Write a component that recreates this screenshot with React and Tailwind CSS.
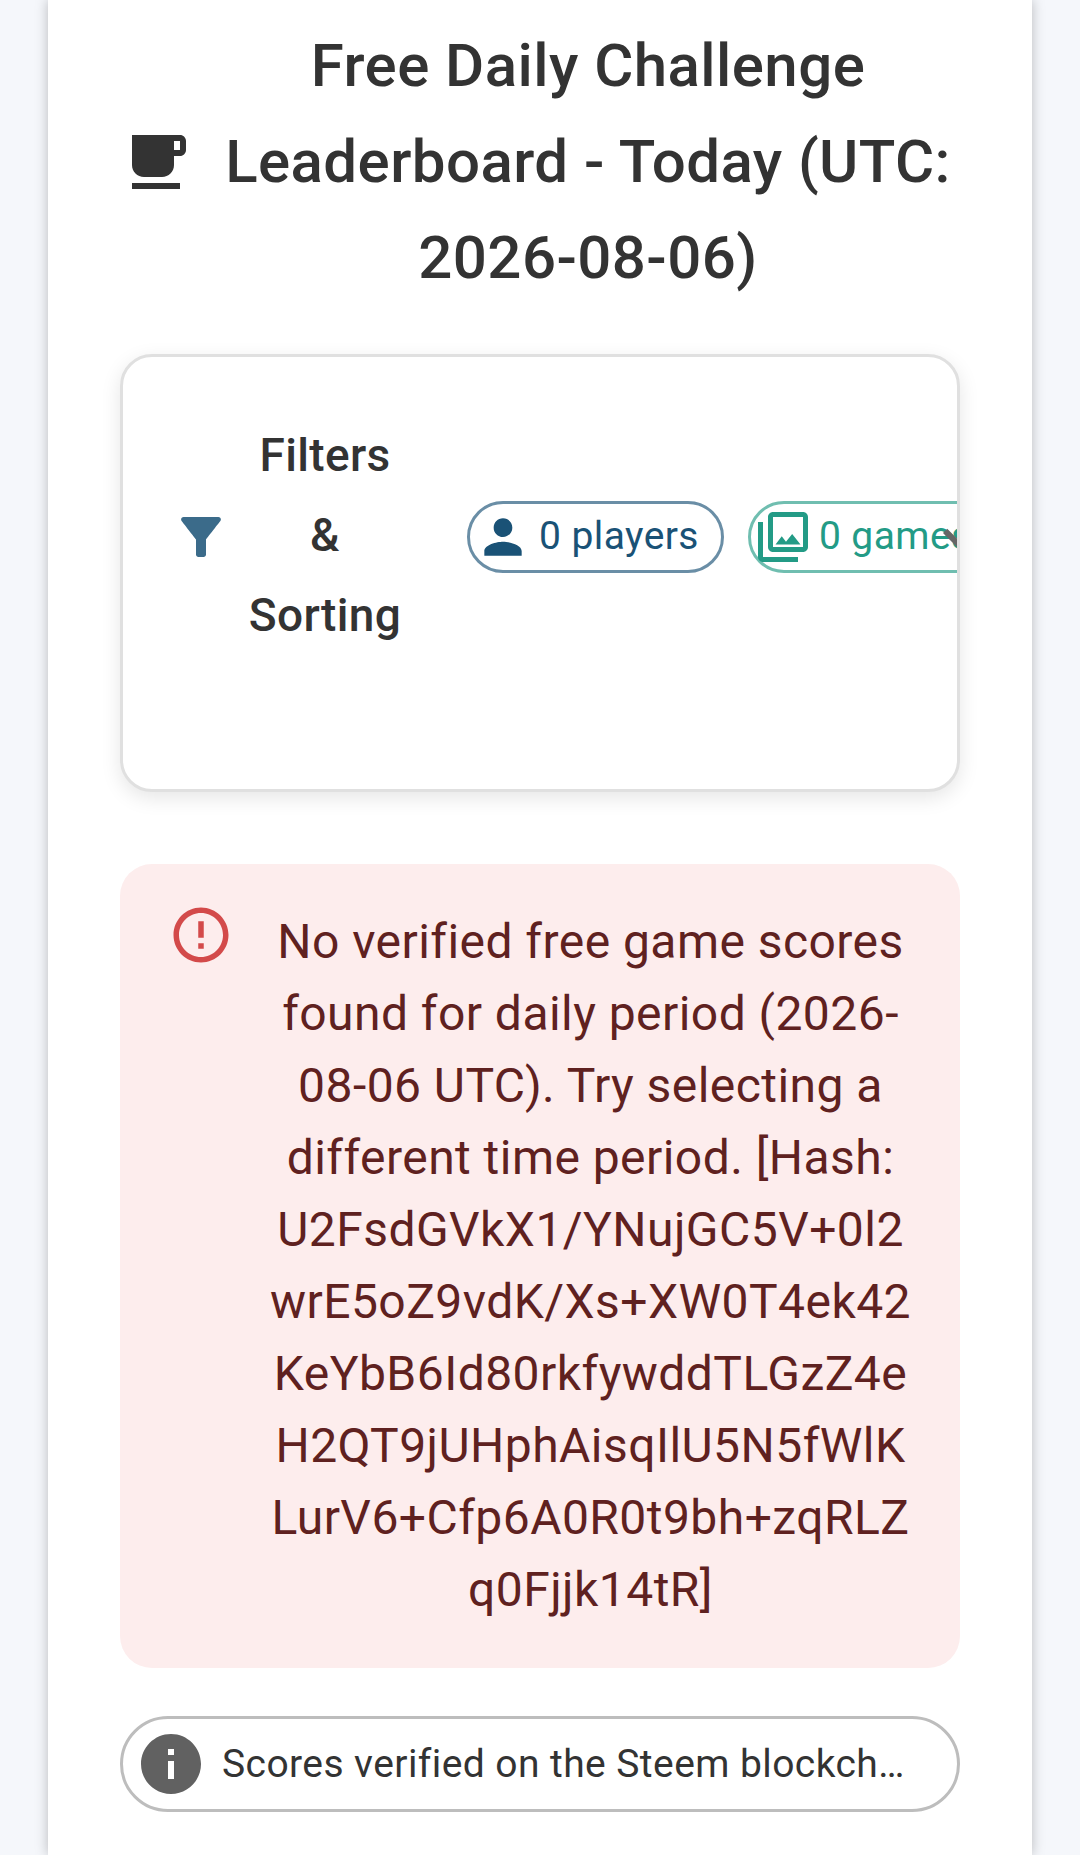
import React from 'react';

const roboto = "font-['Roboto',sans-serif]";

function Icon({ d, className }) {
  return (
    <svg viewBox="0 0 24 24" fill="currentColor" className={className}>
      <path d={d} />
    </svg>
  );
}

const paths = {
  cafe: 'M20 3H4v10c0 2.21 1.79 4 4 4h6c2.21 0 4-1.79 4-4v-3h2c1.11 0 2-.9 2-2V5c0-1.11-.89-2-2-2zm0 5h-2V5h2v3zM4 19h16v2H4z',
  filter: 'M4.25 5.61C6.27 8.2 10 13 10 13v6c0 .55.45 1 1 1h2c.55 0 1-.45 1-1v-6s3.72-4.8 5.74-7.39c.51-.66.04-1.61-.79-1.61H5.04c-.83 0-1.3.95-.79 1.61z',
  person: 'M12 12c2.21 0 4-1.79 4-4s-1.79-4-4-4-4 1.79-4 4 1.79 4 4 4zm0 2c-2.67 0-8 1.34-8 4v2h16v-2c0-2.66-5.33-4-8-4z',
  library: 'M20 4v12H8V4h12m0-2H8c-1.1 0-2 .9-2 2v12c0 1.1.9 2 2 2h12c1.1 0 2-.9 2-2V4c0-1.1-.9-2-2-2zm-8.5 9.67l1.69 2.26 2.48-3.1L19 15H9zM2 6v14c0 1.1.9 2 2 2h14v-2H4V6H2z',
  expand: 'M16.59 8.59L12 13.17 7.41 8.59 6 10l6 6 6-6z',
  error: 'M11 15h2v2h-2zm0-8h2v6h-2zm.99-5C6.47 2 2 6.48 2 12s4.47 10 9.99 10C17.52 22 22 17.52 22 12S17.52 2 11.99 2zM12 20c-4.42 0-8-3.58-8-8s3.58-8 8-8 8 3.58 8 8-3.58 8-8 8z',
  info: 'M12 2C6.48 2 2 6.48 2 12s4.48 10 10 10 10-4.48 10-10S17.52 2 12 2zm1 15h-2v-6h2v6zm0-8h-2V7h2v2z',
};

export default function App() {
  return (
    <div className={`${roboto} h-[1855px] overflow-hidden bg-[#f5f7fb] px-12`}>
      <div className="h-full bg-white px-[72px] pt-[18px] shadow-[0_0_12px_rgba(0,0,0,0.25)]">
        {/* Title */}
        <h2 className="flex items-center gap-6 text-[60px] leading-[96px] font-medium tracking-[0.44px] text-[#333333]">
          <Icon d={paths.cafe} className="h-[72px] w-[72px] shrink-0" />
          <span className="flex-1 text-center">
            Free Daily Challenge Leaderboard - Today (UTC: 2026-08-06)
          </span>
        </h2>

        {/* Filters */}
        <div className="relative mt-[48px] flex items-center overflow-hidden rounded-[32px] border-[3px] border-[#e0e0e0] bg-white pt-[58px] pb-[134px] pl-12 shadow-[0_6px_20px_rgba(0,0,0,0.1)]">
          <Icon d={paths.filter} className="mt-[3px] h-[60px] w-[60px] shrink-0 text-[#1a5276] opacity-85" />
          <div className="mr-[62px] ml-[14px] w-[160px] shrink-0 text-center text-[46px] leading-[80px] font-medium tracking-[0.34px] text-[#333333]">
            Filters &amp; Sorting
          </div>
          <div className="mt-[3px] flex shrink-0 items-center gap-6 text-[39px] tracking-[0.42px]">
            <div className="flex h-[72px] items-center rounded-full border-[3px] border-[#1a5276]/65 pr-[22px] pl-[5px] text-[#1a5276]">
              <Icon d={paths.person} className="mr-[8px] h-[56px] w-[56px] shrink-0" />
              0 players
            </div>
            <div className="flex h-[72px] items-center rounded-full border-[3px] border-[#239b86]/65 pr-6 pl-[2px] text-[#239b86]">
              <Icon d={paths.library} className="mr-[6px] h-[60px] w-[60px] shrink-0" />
              0 games
            </div>
          </div>
          <Icon d={paths.expand} className="absolute top-[146px] left-[802px] h-[72px] w-[72px] text-[#666666]" />
        </div>

        {/* Error alert */}
        <div className="mt-[72px] flex rounded-[32px] bg-[#fdeded] pt-[38px] pr-12 pb-[42px] pl-12 text-[#5f2120]">
          <Icon d={paths.error} className="h-[66px] w-[66px] shrink-0 text-[#d34a4a]" />
          <p className="mt-[4px] ml-[35px] min-w-0 flex-1 text-center text-[48px] leading-[72px] tracking-[0.45px] break-words">
            No verified free game scores found for daily period (2026-08-06 UTC). Try selecting a different time period. [Hash: U2FsdGVkX1/YNujGC5V+0l2wrE5oZ9vdK/Xs+XW0T4ek42KeYbB6Id80rkfywddTLGzZ4eH2QT9jUHphAisqIlU5N5fWlKLurV6+Cfp6A0R0t9bh+zqRLZq0Fjjk14tR]
          </p>
        </div>

        {/* Info chip */}
        <div className="mt-12 flex h-24 items-center rounded-full border-[3px] border-[#bdbdbd] pr-[48px] pl-3 text-[#333333]">
          <Icon d={paths.info} className="h-[72px] w-[72px] shrink-0 text-[#616161]" />
          <span className="ml-[15px] min-w-0 truncate text-[39px] tracking-[0.42px]">
            Scores verified on the Steem blockchain for transparency
          </span>
        </div>
      </div>
    </div>
  );
}
